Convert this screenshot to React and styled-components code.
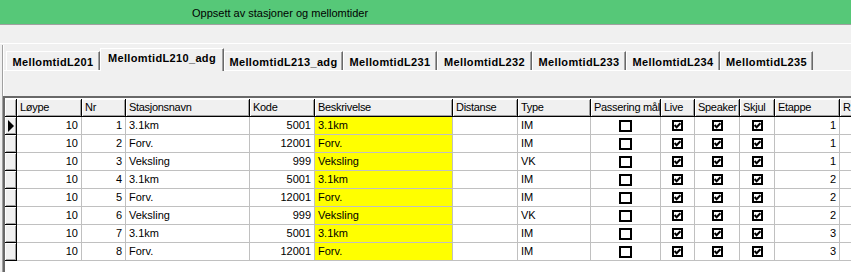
import React from "react"
import styled, { createGlobalStyle } from "styled-components"

const GlobalStyle = createGlobalStyle`
  html, body {
    margin: 0;
    padding: 0;
    background: #f0f0f0;
  }
  body {
    font-family: "Liberation Sans", Arial, sans-serif;
    font-size: 11px;
    color: #000;
  }
`

const tabs = [
  { label: "MellomtidL201", w: 94 },
  { label: "MellomtidL210_adg", w: 124, active: true },
  { label: "MellomtidL213_adg", w: 119 },
  { label: "MellomtidL231", w: 94 },
  { label: "MellomtidL232", w: 95 },
  { label: "MellomtidL233", w: 94 },
  { label: "MellomtidL234", w: 94 },
  { label: "MellomtidL235", w: 93 },
]

const columns = [
  { key: "loype", title: "Løype", w: 65, align: "right" },
  { key: "nr", title: "Nr", w: 44, align: "right" },
  { key: "navn", title: "Stasjonsnavn", w: 124 },
  { key: "kode", title: "Kode", w: 65, align: "right" },
  { key: "besk", title: "Beskrivelse", w: 138, yellow: true },
  { key: "dist", title: "Distanse", w: 65 },
  { key: "type", title: "Type", w: 73 },
  { key: "pass", title: "Passering mål", w: 70, check: true },
  { key: "live", title: "Live", w: 34, check: true },
  { key: "speaker", title: "Speaker", w: 45, check: true },
  { key: "skjul", title: "Skjul", w: 35, check: true },
  { key: "etappe", title: "Etappe", w: 65, align: "right" },
  { key: "r", title: "R", w: 60 },
]

const base = [
  ["3.1km", 5001, "IM"],
  ["Forv.", 12001, "IM"],
  ["Veksling", 999, "VK"],
]

const rows = Array.from({ length: 8 }, (_, i) => {
  const [navn, kode, type] = base[i % 3]
  return {
    loype: 10,
    nr: i + 1,
    navn,
    kode,
    besk: navn,
    dist: "",
    type,
    pass: false,
    live: true,
    speaker: true,
    skjul: true,
    etappe: i < 3 ? 1 : i < 6 ? 2 : 3,
    r: "",
  }
})

const CheckBox = ({ checked }) =>
  checked ? (
    <svg width="11" height="11" viewBox="0 0 11 11">
      <rect x="1" y="1" width="9" height="9" fill="#fff" stroke="#000" strokeWidth="2" />
      <path d="M2.6 5 L4.6 7.2 L8.4 3.2" fill="none" stroke="#000" strokeWidth="2" />
    </svg>
  ) : (
    <svg width="13" height="12" viewBox="0 0 13 12">
      <rect x="1" y="1" width="11" height="10" fill="#fff" stroke="#000" strokeWidth="2" />
    </svg>
  )

const App = () => {
  return (
    <Page>
      <GlobalStyle />
      <TitleBar>Oppsett av stasjoner og mellomtider</TitleBar>
      <Toolbar />
      <PageControl>
        <TabStrip>
          {tabs.map((t) => (
            <Tab key={t.label} $active={t.active} $w={t.w}>
              {t.label}
            </Tab>
          ))}
        </TabStrip>
        <TabPanel />
        <Grid>
          <HeaderRow>
            <Indicator />
            {columns.map((c) => (
              <HeadCell key={c.key} $w={c.w}>
                {c.title}
              </HeadCell>
            ))}
          </HeaderRow>
          {rows.map((r, i) => (
            <Row key={i}>
              <Indicator>{i === 0 && <Arrow />}</Indicator>
              {columns.map((c) => (
                <Cell key={c.key} $w={c.w} $align={c.align} $yellow={c.yellow} $check={c.check}>
                  {c.check ? <CheckBox checked={r[c.key]} /> : r[c.key]}
                </Cell>
              ))}
            </Row>
          ))}
        </Grid>
      </PageControl>
    </Page>
  )
}

export default App

const Page = styled.div`
  width: 851px;
  height: 272px;
  overflow: hidden;
  background: #f0f0f0;
`

const TitleBar = styled.div`
  height: 24px;
  line-height: 26px;
  background: #56c878;
  border-bottom: 1px solid #a0a0a0;
  padding-left: 192px;
  font-size: 11px;
  color: #000;
`

const Toolbar = styled.div`
  height: 18px;
  background: #f0f0f0;
  border-bottom: 1px solid #fff;
`

const PageControl = styled.div`
  margin-left: 2px;
  border-left: 1px solid #a0a0a0;
  box-shadow: inset 1px 0 #fff;
  height: 240px;
`

const TabStrip = styled.div`
  display: flex;
  align-items: flex-end;
  height: 25px;
  padding-left: 3px;
  margin-top: 1px;
`

const Tab = styled.div`
  box-sizing: border-box;
  width: ${(p) => p.$w}px;
  height: ${(p) => (p.$active ? 23 : 19)}px;
  padding-top: ${(p) => (p.$active ? 2 : 3)}px;
  margin-bottom: ${(p) => (p.$active ? -1 : 0)}px;
  position: relative;
  background: #f0f0f0;
  border-top: 1px solid #fff;
  border-left: 1px solid #fff;
  border-right: 1px solid #696969;
  box-shadow: inset -1px 0 #a0a0a0;
  font-weight: bold;
  font-size: 11px;
  letter-spacing: 0.35px;
  text-align: center;
  line-height: 14px;
  white-space: nowrap;
`

const TabPanel = styled.div`
  height: 25px;
  border-top: 1px solid #fff;
`

const Grid = styled.div`
  background: #fff;
  border-top: 2px solid #696969;
  border-left: 2px solid #696969;
  height: 200px;
`

const HeaderRow = styled.div`
  display: flex;
  height: 18px;
  margin-top: 1px;
`

const Row = styled.div`
  display: flex;
  height: 18px;
`

const Indicator = styled.div`
  box-sizing: border-box;
  flex: none;
  width: 12px;
  height: 18px;
  background: #f0f0f0;
  border-right: 1px solid #000;
  border-bottom: 1px solid #000;
  box-shadow: inset 1px 1px #fff, inset -1px -1px #a0a0a0;
  display: flex;
  align-items: center;
  justify-content: center;
`

const Arrow = styled.div`
  width: 0;
  height: 0;
  border-top: 6px solid transparent;
  border-bottom: 6px solid transparent;
  border-left: 6px solid #000;
  margin-left: 1px;
`

const HeadCell = styled.div`
  box-sizing: border-box;
  flex: none;
  width: ${(p) => p.$w}px;
  height: 18px;
  padding: 0 1px 0 3px;
  line-height: 17px;
  background: #f0f0f0;
  border-right: 1px solid #000;
  border-bottom: 1px solid #000;
  box-shadow: inset 1px 1px #fff, inset -1px -1px #a0a0a0;
  letter-spacing: -0.3px;
  white-space: nowrap;
  overflow: hidden;
`

const Cell = styled.div`
  box-sizing: border-box;
  flex: none;
  width: ${(p) => p.$w}px;
  height: 18px;
  padding: 0 3px;
  line-height: 17px;
  background: ${(p) => (p.$yellow ? "#ffff00" : "#fff")};
  border-right: 1px solid #c0c0c0;
  border-bottom: 1px solid #c0c0c0;
  text-align: ${(p) => p.$align || "left"};
  white-space: nowrap;
  overflow: hidden;
  ${(p) =>
    p.$check &&
    `
    display: flex;
    align-items: center;
    justify-content: center;
  `}
`
